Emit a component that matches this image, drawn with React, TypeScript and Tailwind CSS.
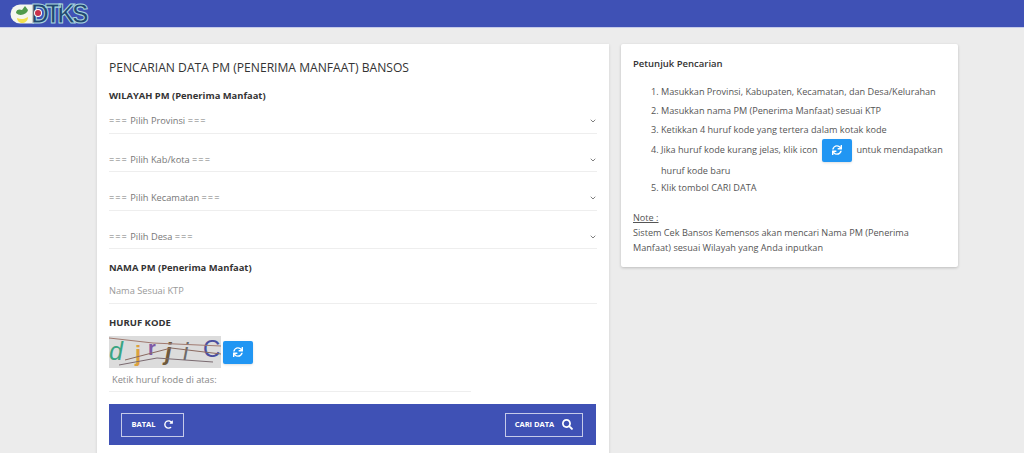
import { ChevronDown } from 'lucide-react';
import { FaRedoAlt, FaSearch, FaSync } from 'react-icons/fa';

const selects = ['Pilih Provinsi', 'Pilih Kab/kota', 'Pilih Kecamatan', 'Pilih Desa'];

function Logo() {
    return (
        <div className="flex items-center">
            <svg width="24" height="20" viewBox="0 0 24 20" className="mr-[-3px]">
                <path d="M10 0.5 H24 V19.5 H10 A9.5 9.5 0 0 1 10 0.5 Z" fill="#f4f6ee" />
                <path d="M7 14 C11 16 15 15 18 13 C18 17 15 19 12 19 C10 19 7 17 7 14 Z" fill="#f2e04e" />
                <path d="M6 9 C6 5 10 5 12 6 L15 2 L18 6 C17 10 10 13 6 9 Z" fill="#4f9a4c" />
            </svg>
            <div className="relative flex items-center">
                <span className="scale-y-110 font-['Liberation_Sans',sans-serif] text-[25px] font-bold leading-none tracking-[-3.5px] text-[#22486e] [-webkit-text-stroke:1px_#a8d4de]">
                    DTKS
                </span>
                <span className="absolute left-[4px] top-[9px] size-[6px] rounded-full bg-[#c9304a] ring-1 ring-white" />
            </div>
        </div>
    );
}

function RefreshButton() {
    return (
        <span className="inline-flex h-[23px] w-[30px] items-center justify-center rounded-[2px] bg-[#2196f3] shadow-sm">
            <FaSync size={10} className="text-white" />
        </span>
    );
}

function Captcha() {
    return (
        <svg width="112" height="32" viewBox="0 0 112 32" className="bg-[#dcdcdc] font-['Liberation_Sans',sans-serif]">
            <text x="0" y="24" fontSize="25" fontStyle="italic" fill="#3aa583">d</text>
            <text x="26" y="25" fontSize="22" fontWeight="bold" fill="#dca13e">j</text>
            <text x="39" y="19" fontSize="20" fontWeight="bold" fill="#7f5aa5">r</text>
            <text x="56" y="24" fontSize="24" fontWeight="bold" fontStyle="italic" fill="#6f5a3c">j</text>
            <text x="74" y="24" fontSize="24" fontStyle="italic" fill="#6b6b6b">i</text>
            <text x="94" y="21" fontSize="24" fill="#4a4fa0">C</text>
            <path d="M0 2 L44 7 L112 10" stroke="#a07a70" strokeWidth="1" fill="none" />
            <path d="M16 24 L62 12 L112 18" stroke="#8a6a60" strokeWidth="1" fill="none" />
            <path d="M10 29 L48 22 L104 26" stroke="#7a6a70" strokeWidth="1" fill="none" />
        </svg>
    );
}

export default function App() {
    return (
        <div className="h-[453px] overflow-hidden bg-[#ececec] font-['Open_Sans',sans-serif] text-[#444]">
            <header className="flex h-[28px] items-center border-b border-[#c5cae9] bg-[#3f51b5] pl-[10px]">
                <Logo />
            </header>

            <main className="flex items-start gap-3 pl-[97px] pt-4">
                <section className="w-[512px] bg-white px-3 pb-6 pt-[14px] shadow-[0_1px_3px_rgba(0,0,0,0.12)]">
                    <h1 className="text-[12.1px] leading-[20px] text-[#333]">PENCARIAN DATA PM (PENERIMA MANFAAT) BANSOS</h1>
                    <h2 className="mt-[10px] text-[9.4px] font-bold leading-[16px] text-[#333]">WILAYAH PM (Penerima Manfaat)</h2>

                    <div className="mt-[2px]">
                        {selects.map((s) => (
                            <div key={s} className="mb-[11px] flex h-[27.5px] items-start justify-between border-b border-[#eeeeee] pt-[8px] text-[9.25px] leading-[14px] text-[#777]">
                                <span>
                                    <span className="tracking-[1px]">===</span> {s} <span className="tracking-[1px]">===</span>
                                </span>
                                <ChevronDown size={8} strokeWidth={2.5} className="mt-[3px] text-[#666]" />
                            </div>
                        ))}
                    </div>

                    <h2 className="mt-[3px] text-[9.4px] font-bold leading-[16px] text-[#333]">NAMA PM (Penerima Manfaat)</h2>
                    <div className="mt-[5px] h-[23px] border-b border-[#eeeeee] pt-[3px] text-[9.25px] leading-[14px] text-[#999]">Nama Sesuai KTP</div>

                    <h2 className="mt-[11px] text-[9.5px] font-bold leading-[16px] text-[#333]">HURUF KODE</h2>
                    <div className="mt-[5px] flex items-center gap-[2px]">
                        <Captcha />
                        <RefreshButton />
                    </div>
                    <div className="mt-[1px] h-[23px] w-[362px] border-b border-[#eeeeee] pl-[3px] pt-[4px] text-[9.25px] leading-[14px] text-[#888]">Ketik huruf kode di atas:</div>

                    <div className="mr-[1px] mt-[12px] flex h-[41px] items-center justify-between bg-[#3f51b5] pl-3 pr-[13px]">
                        <button className="flex h-[24px] w-[63px] items-center justify-center gap-[9px] border border-[#c5cae9] text-[7.5px] font-bold text-white">
                            BATAL <FaRedoAlt size={9} />
                        </button>
                        <button className="flex h-[24px] w-[78px] items-center justify-center gap-[8px] border border-[#c5cae9] text-[7.5px] font-bold text-white">
                            CARI DATA <FaSearch size={11} />
                        </button>
                    </div>
                </section>

                <aside className="w-[337px] rounded-[2px] bg-white pb-[12px] pl-3 pr-3 pt-[13px] text-[9.15px] leading-[14px] text-[#555] shadow-[0_1px_3px_rgba(0,0,0,0.2)]">
                    <h2 className="text-[9.5px] font-semibold text-[#333]">Petunjuk Pencarian</h2>
                    <ol className="mt-[14px] list-decimal pl-[28px]">
                        <li className="pb-[5px]">Masukkan Provinsi, Kabupaten, Kecamatan, dan Desa/Kelurahan</li>
                        <li className="pb-[5px]">Masukkan nama PM (Penerima Manfaat) sesuai KTP</li>
                        <li className="pb-[1.5px]">Ketikkan 4 huruf kode yang tertera dalam kotak kode</li>
                        <li className="leading-[21px]">
                            Jika huruf kode kurang jelas, klik icon{' '}
                            <span className="mx-[2px] my-[-2px] inline-block align-middle leading-none"><RefreshButton /></span>{' '}
                            untuk mendapatkan huruf kode baru
                        </li>
                        <li>Klik tombol CARI DATA</li>
                    </ol>
                    <p className="mt-[16px] underline">Note :</p>
                    <p className="mt-[0.5px] leading-[15px]">Sistem Cek Bansos Kemensos akan mencari Nama PM (Penerima Manfaat) sesuai Wilayah yang Anda inputkan</p>
                </aside>
            </main>
        </div>
    );
}
